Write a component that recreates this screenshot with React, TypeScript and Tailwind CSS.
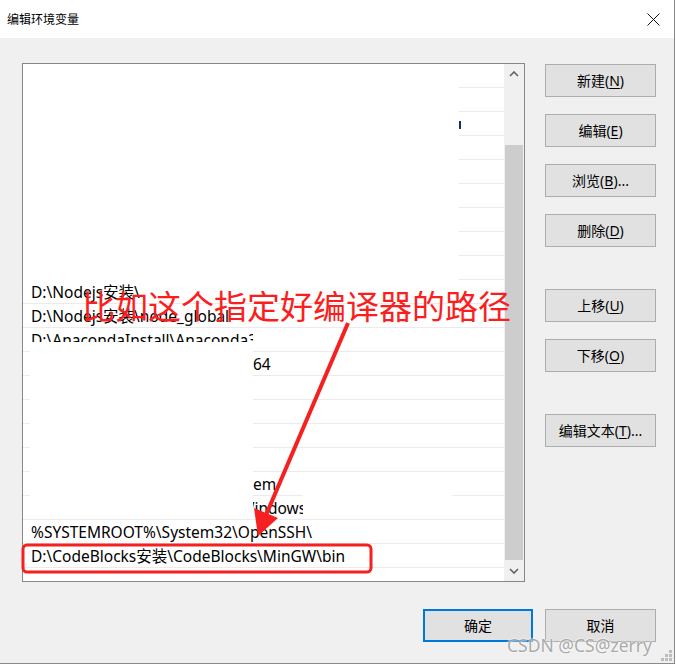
import React from "react";

const FONT = { fontFamily: '"Noto Sans", "Noto Sans CJK SC", sans-serif' };

function Btn({ label, u, tail = "", w = "w-[111px]", primary = false }: { label: string; u: string; tail?: string; w?: string; primary?: boolean }) {
  return (
    <div
      className={`${w} h-[33px] flex items-center justify-center text-[14px] text-black bg-[#e1e1e1] ${primary ? "border-2 border-[#0078d7]" : "border border-[#adadad]"}`}
    >
      <span>
        {label}
        {u ? (
          <>
            (<span className="underline underline-offset-2">{u}</span>){tail}
          </>
        ) : null}
      </span>
    </div>
  );
}

const tick = <span className="ml-[7px] inline-block w-[1px] h-[4px] bg-[#f0a040] translate-y-[-3px]" />;

const rows: React.ReactNode[] = [
  null,
  null,
  <span className="ml-[436px] inline-block w-[2px] h-[8px] bg-[#1a2a6a]" />,
  null,
  null,
  null,
  null,
  null,
  null,
  <span className="pl-[8px]">D:\Nodejs安装\</span>,
  <span className="pl-[8px]">D:\Nodejs安装\node_global</span>,
  <span className="ml-[8px] inline-block w-[222px] overflow-hidden">D:\AnacondaInstall\Anaconda3\bin</span>,
  <span className="pl-[230px]">64</span>,
  null,
  null,
  tick,
  tick,
  <span className="pl-[230px]">em</span>,
  <span className="pl-[217px]">Windows</span>,
  <span className="pl-[8px]">%SYSTEMROOT%\System32\OpenSSH\</span>,
  <span className="pl-[8px]">D:\CodeBlocks安装\CodeBlocks\MinGW\bin</span>,
  null,
];

export default function App() {
  return (
    <div className="relative w-[676px] h-[665px] bg-white overflow-hidden" style={FONT}>
      <div className="w-[675px] h-[664px] border-r border-b border-[#8a8a8a] bg-[#f0f0f0] flex flex-col">
        {/* title bar */}
        <div className="h-[38px] bg-white flex items-center justify-between pl-[7px] pr-[14px] shrink-0">
          <span className="text-[12px] text-black" style={{ fontFamily: '"Noto Sans CJK SC", sans-serif' }}>编辑环境变量</span>
          <svg width="13" height="13" viewBox="0 0 13 13">
            <path d="M0.5 0.5 L12.5 12.5 M12.5 0.5 L0.5 12.5" stroke="#111" strokeWidth="1" />
          </svg>
        </div>
        {/* body */}
        <div className="flex pl-[22px] pt-[25px]">
          {/* list box */}
          <div className="relative w-[503px] h-[519px] border border-[#828790] bg-white flex overflow-hidden">
            <div className="relative flex-1 flex flex-col overflow-hidden">
              {rows.map((r, i) => (
                <div key={i} className="h-[24px] shrink-0 border-b border-[#ebebeb] flex items-center pt-[3px] text-[15.5px] text-black whitespace-nowrap">
                  {r}
                </div>
              ))}
              {/* redaction overlays */}
              <div className="absolute left-0 top-0 w-[436px] h-[219px] bg-white" />
              <div className="absolute left-[7px] top-[278px] w-[223px] h-[176px] bg-white" />
              <div className="absolute left-[280px] top-[422px] w-[149px] h-[33px] bg-white" />
            </div>
            {/* scrollbar */}
            <div className="w-[20px] h-full bg-[#f0f0f0] flex flex-col">
              <div className="h-[20px] flex items-center justify-center">
                <svg width="10" height="6" viewBox="0 0 10 6">
                  <path d="M1 5 L5 1 L9 5" stroke="#606060" strokeWidth="1.6" fill="none" />
                </svg>
              </div>
              <div className="h-[61px]" />
              <div className="h-[415px] mx-[1px] bg-[#cdcdcd]" />
              <div className="flex-1 flex items-center justify-center">
                <svg width="10" height="6" viewBox="0 0 10 6">
                  <path d="M1 1 L5 5 L9 1" stroke="#606060" strokeWidth="1.6" fill="none" />
                </svg>
              </div>
            </div>
          </div>
          {/* button column */}
          <div className="ml-[20px] mt-[1px] flex flex-col">
            <Btn label="新建" u="N" />
            <div className="h-[17px]" />
            <Btn label="编辑" u="E" />
            <div className="h-[17px]" />
            <Btn label="浏览" u="B" tail="..." />
            <div className="h-[17px]" />
            <Btn label="删除" u="D" />
            <div className="h-[42px]" />
            <Btn label="上移" u="U" />
            <div className="h-[17px]" />
            <Btn label="下移" u="O" />
            <div className="h-[42px]" />
            <Btn label="编辑文本" u="T" tail="..." />
          </div>
        </div>
        {/* footer */}
        <div className="mt-[27px] flex justify-end gap-[12px] pr-[18px]">
          <Btn label="确定" u="" w="w-[110px]" primary />
          <Btn label="取消" u="" />
        </div>
      </div>

      {/* resize grip */}
      <svg className="absolute left-[661px] top-[650px]" width="12" height="12" viewBox="0 0 12 12">
        {[
          [8, 0],
          [4, 4],
          [8, 4],
          [0, 8],
          [4, 8],
          [8, 8],
        ].map(([x, y], i) => (
          <rect key={i} x={x} y={y} width="3" height="3" fill="#bdbdbd" />
        ))}
      </svg>

      {/* watermark */}
      <div
        className="absolute left-[507px] top-[632px] text-[17.5px] text-[#a3a3a3] whitespace-nowrap"
        style={{ textShadow: "0 0 2px #fff, 0 0 2px #fff", opacity: 0.9 }}
      >
        CSDN @CS@zerry
      </div>

      {/* annotations */}
      <div
        className="absolute left-[82px] top-[289px] text-[33px] leading-none text-[#fb1e1e] whitespace-nowrap"
        style={{ fontFamily: '"Noto Sans CJK SC", sans-serif' }}
      >
        比如这个指定好编译器的路径
      </div>
      <svg className="absolute left-0 top-0 pointer-events-none" width="676" height="665" viewBox="0 0 676 665">
        <line x1="348" y1="323" x2="266" y2="515" stroke="#f52020" strokeWidth="4" />
        <polygon points="258,536 254,508 278,518" fill="#f52020" />
        <rect x="23" y="545" width="348" height="27" rx="4" fill="none" stroke="#f52020" strokeWidth="3" />
      </svg>
    </div>
  );
}
